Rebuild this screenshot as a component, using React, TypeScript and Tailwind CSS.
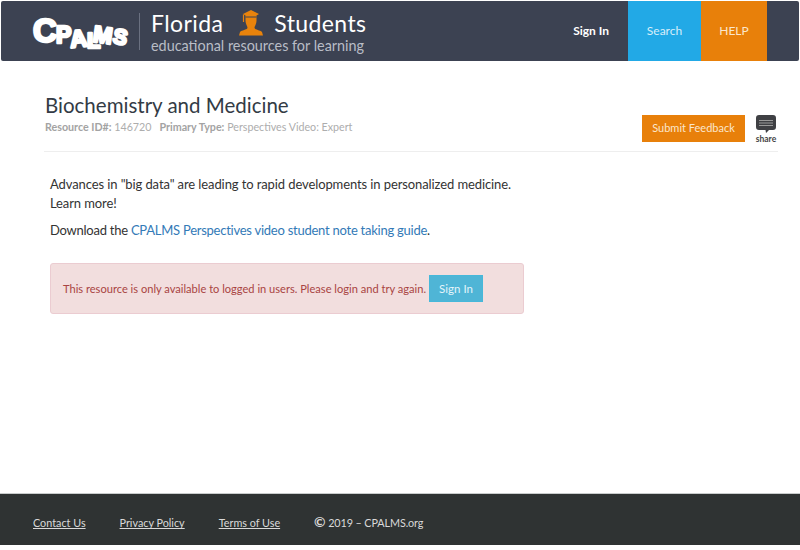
import React from "react";

const Logo = () => (
  <svg width="96" height="34" viewBox="0 0 96 34" className="shrink-0 overflow-visible">
    <g fill="#fff" stroke="#fff" strokeWidth="2.6" strokeLinejoin="round" fontFamily="'Liberation Sans', sans-serif" fontWeight="700">
      <text x="1" y="26" fontSize="33">C</text>
      <text x="24" y="27" fontSize="23">P</text>
      <text x="38" y="31" fontSize="24" transform="rotate(-6 46 25)">A</text>
      <text x="55" y="32" fontSize="22">L</text>
      <text x="61" y="27" fontSize="23" transform="rotate(8 72 20)">M</text>
      <text x="81" y="28" fontSize="21" transform="rotate(12 88 22)">S</text>
    </g>
  </svg>
);

const Student = () => (
  <svg width="24" height="26" viewBox="0 0 24 26" className="shrink-0">
    <path fill="#e8830c" d="M12 0 L20 4 L17.5 5.5 L17.5 11 C17.5 14 15.5 16 15.5 18 C16.5 20 21 20 23 22 L24 25.5 L0 25.5 L1 22 C3 20 7.5 20 8.5 18 C8.5 16 6.5 14 6.5 11 L6.5 5.5 L4 4 Z" />
    <path stroke="#3c4252" strokeWidth="1" fill="none" d="M6.5 7 L17.5 7" />
    <path stroke="#e8830c" strokeWidth="1.2" fill="none" d="M4.5 4.5 L4.5 12" />
  </svg>
);

const Share = () => (
  <div className="flex flex-col items-center w-[20px]">
    <svg width="20" height="18" viewBox="0 0 20 18">
      <path fill="#3f4044" d="M3 0 H17 A3 3 0 0 1 20 3 V12 A3 3 0 0 1 17 15 H13 L10 18 L9.5 15 H3 A3 3 0 0 1 0 12 V3 A3 3 0 0 1 3 0 Z" />
      <path stroke="#9a9a9a" strokeWidth="1" d="M3 5.5 H17 M3 8 H17 M3 10.5 H17" />
    </svg>
    <span className="text-[8.5px] leading-[10px] text-[#444] font-bold mt-[1px]">share</span>
  </div>
);

export default function App() {
  return (
    <div className="flex flex-col h-[550px] w-[800px] bg-white overflow-hidden text-[#333]" style={{ fontFamily: "Lato, 'Noto Sans', sans-serif" }}>
      <header className="mx-[1px] mt-[1px] h-[60px] rounded-[2px] bg-[#3c4252] flex items-stretch shrink-0">
        <div className="flex items-center pl-[31px]">
          <div className="mt-[3px]"><Logo /></div>
          <div className="w-px h-[37px] bg-[#6a7080] ml-[11px] mr-[11px]" />
          <div className="flex flex-col">
            <div className="flex items-center text-white text-[23px] leading-[28px] h-[28px] mt-[1px]">
              <span className="tracking-[0.4px]">Florida</span>
              <span className="ml-[16px] mr-[11px]"><Student /></span>
              <span className="tracking-[0.4px]">Students</span>
            </div>
            <div className="text-[#b9bdc6] text-[14.4px] leading-[18px]">educational resources for learning</div>
          </div>
        </div>
        <nav className="ml-auto flex items-stretch text-[12px]">
          <a className="flex items-center text-white font-bold mr-[19px]">Sign In</a>
          <a className="w-[73px] flex items-center justify-center bg-[#22a9e6] text-[#d7eefa]">Search</a>
          <a className="w-[66px] flex items-center justify-center bg-[#e8800a] text-[#fbe6cc]">HELP</a>
          <div className="w-[32px]" />
        </nav>
      </header>

      <main className="flex-1 pl-[44px] pr-[22px]">
        <div className="mt-[32px] h-[59px] border-b border-[#eeeeee] flex justify-between">
          <div className="-mt-[1px] pl-[1px]">
            <h1 className="text-[20.5px] leading-[26px] text-[#333b45]">Biochemistry and Medicine</h1>
            <div className="text-[10.7px] leading-[14px] mt-[2px] text-[#adadad]">
              <span className="font-bold text-[#a3a3a3]">Resource ID#:</span> 146720
              <span className="font-bold text-[#a3a3a3] ml-[8px]">Primary Type:</span> Perspectives Video: Expert
            </div>
          </div>
          <div className="flex items-start pt-[22px] pr-[2px]">
            <a className="w-[103px] h-[27px] flex items-center justify-center bg-[#e8800a] text-[#fbe6cc] text-[11px]">Submit Feedback</a>
            <div className="ml-[11px]"><Share /></div>
          </div>
        </div>

        <div className="px-[6px] text-[13px] tracking-[-0.1px] leading-[19px] text-[#333]">
          <p className="mt-[23px]">Advances in "big data" are leading to rapid developments in personalized medicine.<br />Learn more!</p>
          <p className="mt-[8px] tracking-[-0.25px]">Download the <a className="text-[#337ab7]">CPALMS Perspectives video student note taking guide</a>.</p>
          <div className="mt-[23px] w-[474px] h-[51px] flex items-center pl-[12px] rounded-[3px] border border-[#ebccd1] bg-[#f2dede] text-[#a94442] text-[11.1px] tracking-normal">
            <span>This resource is only available to logged in users. Please login and try again.</span>
            <a className="ml-[3px] w-[54px] h-[27px] flex items-center justify-center bg-[#4fb5d6] border border-[#46b8da] text-[#e3f4fa] text-[11.5px]">Sign In</a>
          </div>
        </div>
      </main>

      <footer className="h-[52px] mb-[5px] shrink-0 bg-[#2f3333] border-t border-[#c9cccc] flex items-center pl-[33px] pt-[8px] text-[10.8px] text-[#d9d9d9]">
        <a className="underline">Contact Us</a>
        <a className="underline ml-[34px]">Privacy Policy</a>
        <a className="underline ml-[34px]">Terms of Use</a>
        <span className="ml-[34px] tracking-[-0.1px]"><span className="font-bold text-[14px] leading-none">©</span> 2019 – CPALMS.org</span>
      </footer>
    </div>
  );
}
